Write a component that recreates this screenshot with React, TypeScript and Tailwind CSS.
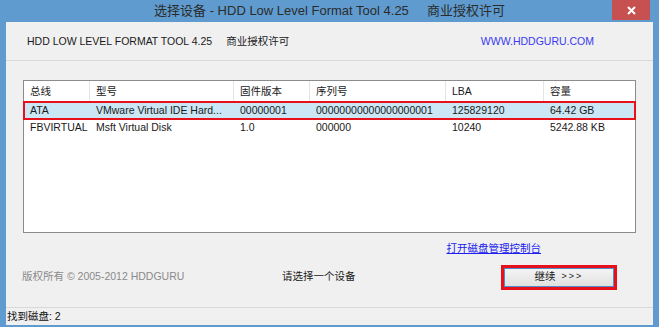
import React from "react";

const font = { fontFamily: '"Liberation Sans", "Noto Sans CJK SC", sans-serif' };

const cols = [
  { w: "w-[66px]", h: "总线" },
  { w: "w-[144px]", h: "型号" },
  { w: "w-[76px]", h: "固件版本" },
  { w: "w-[136px]", h: "序列号" },
  { w: "w-[98px]", h: "LBA" },
  { w: "flex-1", h: "容量" },
];

const rows = [
  ["ATA", "VMware Virtual IDE Hard...", "00000001", "00000000000000000001", "125829120", "64.42 GB"],
  ["FBVIRTUAL", "Msft Virtual Disk", "1.0", "000000", "10240", "5242.88 KB"],
];

export default function App() {
  return (
    <div className="w-[659px] h-[327px] bg-[#5f9bcf] flex flex-col overflow-hidden" style={font}>
      <div className="h-[22px] relative flex items-center justify-center shrink-0">
        <span className="text-[13px] text-[#2b2b2b] leading-none mb-[1px]">
          选择设备 - HDD Low Level Format Tool 4.25&nbsp;&nbsp;&nbsp;&nbsp;&nbsp;商业授权许可
        </span>
        <div className="absolute right-[9px] top-0 w-[38px] h-[20px] bg-[#c75050] flex items-center justify-center">
          <svg width="9" height="9" viewBox="0 0 9 9">
            <path d="M1 1 L8 8 M8 1 L1 8" stroke="white" strokeWidth="2" />
          </svg>
        </div>
      </div>
      <div className="flex-1 ml-[6px] mr-[6px] mb-[2px] bg-[#f0f0f0] flex flex-col text-[10.5px]">
        <div className="h-[38px] flex items-center pl-[21px] pt-[1px] shrink-0 text-[#1a1a1a]">
          <span>HDD LOW LEVEL FORMAT TOOL 4.25</span>
          <span className="ml-[14px]">商业授权许可</span>
          <span className="ml-auto mr-[59px] text-[#3a3af0]">WWW.HDDGURU.COM</span>
        </div>
        <div className="h-[2px] border-t border-[#d8d8d8] border-b-white shrink-0" />
        <div className="px-[17px] pt-[18px] shrink-0">
          <div className="h-[153px] bg-white border border-[#8c8c8c] text-[#1a1a1a]">
            <div className="flex h-[21px] border-b border-[#f0f0f0]">
              {cols.map((c, i) => (
                <div key={i} className={`${c.w} flex items-center pl-[6px] pt-[1px] ${i < 5 ? "border-r border-[#e5e5e5]" : ""}`}>
                  {c.h}
                </div>
              ))}
            </div>
            {rows.map((r, ri) => (
              <div
                key={ri}
                className={`flex h-[17px] ${ri === 0 ? "bg-[#cbe6f5] outline-2 outline-[#e8101a] -outline-offset-1" : ""}`}
              >
                {r.map((cell, ci) => (
                  <div key={ci} className={`${cols[ci].w} flex items-center pl-[6px] whitespace-nowrap overflow-hidden`}>
                    {cell}
                  </div>
                ))}
              </div>
            ))}
          </div>
        </div>
        <div className="flex justify-end pr-[112px] pt-[9px] h-[24px] shrink-0">
          <span className="text-[#2020ee] underline leading-[13px]">打开磁盘管理控制台</span>
        </div>
        <div className="flex items-center h-[40px] pl-[16px] shrink-0">
          <span className="text-[#8a8a8a] w-[260px]">版权所有 © 2005-2012 HDDGURU</span>
          <span className="text-[#1a1a1a]">请选择一个设备</span>
          <div className="ml-auto mr-[36px] w-[116px] h-[25px] border-[3px] border-[#e8101a] flex">
            <div className="flex-1 border border-[#4f8cc9] bg-gradient-to-b from-[#f4f4f4] to-[#e1e1e1] flex items-center justify-center text-[#1a1a1a]">
              继续 <span className="ml-[6px] text-[9px] tracking-[2px]">&gt;&gt;&gt;</span>
            </div>
          </div>
        </div>
        <div className="flex-1" />
        <div className="h-[18px] border-t border-[#d9d9d9] flex items-center pl-[1px] text-[#111] shrink-0">
          找到磁盘: 2
        </div>
      </div>
    </div>
  );
}
